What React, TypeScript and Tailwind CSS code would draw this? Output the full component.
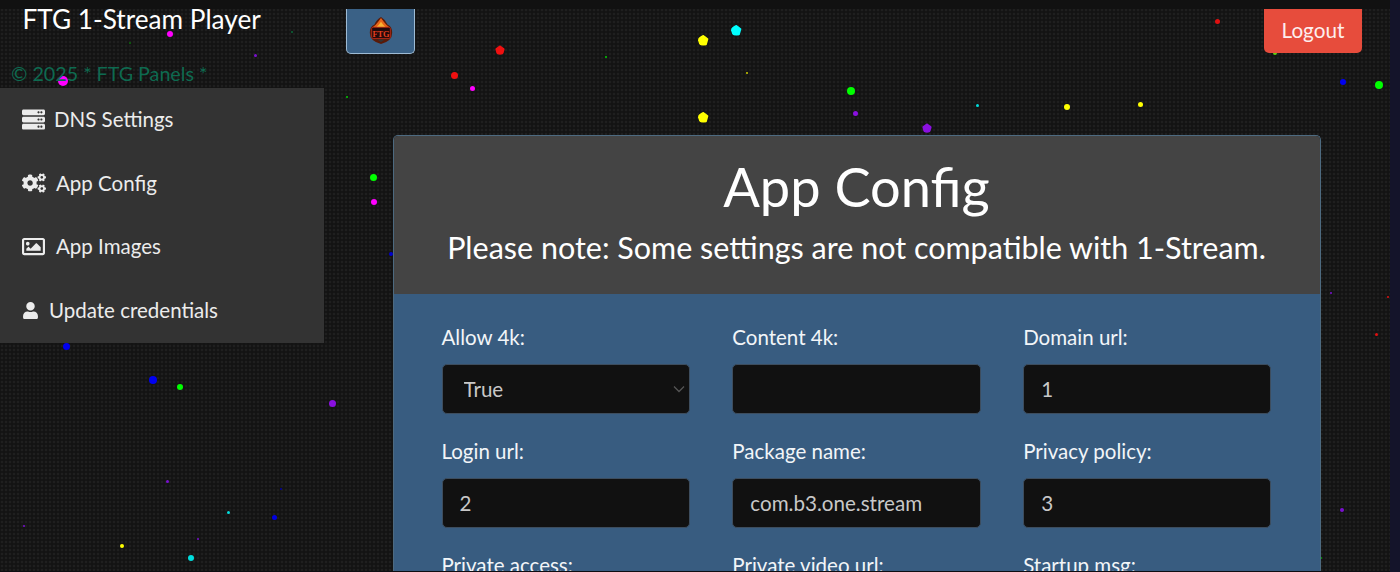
import React from "react";
import { FaServer, FaCogs, FaRegImage, FaUser } from "react-icons/fa";

type Dot = [number, number, number, string];
const dots: Dot[] = [
  [170, 34, 3, "#f0f"], [255, 55, 1.5, "#7a10d0"], [130, 43, 1, "#0a6a0a"], [292, 32, 0.7, "#0a6a3a"],
  [63, 81, 5, "#f0f"], [347, 97, 1, "#0c0"], [500, 50, 4.8, "#f01010"], [454, 75, 3.5, "#f01010"],
  [472, 88, 2.5, "#f0f"], [606, 57, 1, "#0c0"], [703, 40, 5.5, "#ff0"], [736, 30, 5.5, "#0ff"],
  [747, 73, 1, "#cc0"], [851, 91, 4, "#0f0"], [855, 113, 2.5, "#8a10e0"], [703, 117, 5.5, "#ff0"],
  [927, 128, 4.8, "#8a10e0"], [977, 105, 1.5, "#0dd"], [1067, 107, 3, "#ff0"], [1140, 104, 2.5, "#ff0"],
  [1217, 21, 2.5, "#e01010"], [1275, 53, 2, "#60d010"], [1343, 82, 3, "#0000f0"], [1379, 85, 4, "#0f0"],
  [373, 177, 3.5, "#0f0"], [374, 202, 3, "#f0f"], [391, 254, 2, "#0000d0"], [66, 346, 3.5, "#0000f0"],
  [153, 380, 4, "#0000f0"], [180, 387, 3, "#0f0"], [332, 403, 3.5, "#8a10e0"], [167, 481, 1.5, "#7a10d0"],
  [281, 489, 1, "#0000a0"], [228, 512, 1.5, "#0dd"], [274, 517, 2.5, "#0000e0"], [122, 546, 2, "#ff0"],
  [191, 558, 3, "#0dd"], [198, 539, 0.7, "#7a10d0"], [24, 526, 1, "#7a10d0"], [1342, 510, 2, "#7a10d0"],
  [1376, 334, 1.5, "#e01010"], [1388, 297, 1, "#e01010"], [1331, 293, 0.7, "#7a10d0"], [1321, 558, 1, "#0a0"],
];

const pentagon = "polygon(50% 0%, 100% 38%, 82% 100%, 18% 100%, 0% 38%)";

const nav = [
  { label: "DNS Settings", icon: <FaServer className="text-[23px]" />, gap: "gap-[9px]" },
  { label: "App Config", icon: <FaCogs className="text-[24px]" />, gap: "gap-[10px]" },
  { label: "App Images", icon: <FaRegImage className="text-[23px]" />, gap: "gap-[11px]" },
  { label: "Update credentials", icon: <FaUser className="text-[17px]" />, gap: "gap-[10px]" },
];

const Field = ({ label, children }: { label: string; children?: React.ReactNode }) => (
  <div className="flex flex-col">
    <label className="mb-[13px] h-[27px] text-[20.5px] leading-[27px] text-[#f2f5f8]">{label}</label>
    {children}
  </div>
);

const Input = ({ value = "" }: { value?: string }) => (
  <input
    readOnly
    value={value}
    className="mb-[24px] h-[50px] w-full rounded-[5px] border border-[#3d4d5e] bg-[#111111] pl-[17px] text-[20.6px] text-[#c8c8c8] outline-none"
  />
);

export default function App() {
  return (
    <div className="relative h-[572px] w-[1400px] overflow-hidden bg-[#131313] bg-[radial-gradient(circle,#1f1f1f_1px,#131313_1.7px)] bg-size-[4px_4px] font-['Lato','Noto_Sans',sans-serif] text-white">
      {dots.map(([x, y, r, c], i) => (
        <span
          key={i}
          className="absolute rounded-full"
          style={{ left: x - r, top: y - r, width: r * 2, height: r * 2, background: c, clipPath: r >= 4.8 && c !== "#f0f" ? pentagon : undefined }}
        />
      ))}

      <div className="relative flex h-full flex-col border-b border-[#0d0d12]">
        <div className="h-[9px] shrink-0 bg-[#111111]" />
        <div className="flex min-h-0 flex-1 pr-[10px]">
          {/* left column */}
          <aside className="flex w-[324px] shrink-0 flex-col">
            <h1 className="ml-[22.5px] h-[24px] text-[26.2px] leading-[21px] font-normal text-white">FTG 1-Stream Player</h1>
            <p className="ml-[11px] mt-[29px] h-[26px] text-[19.7px] leading-[24px] text-[#0e6a50]">© 2025 * FTG Panels *</p>
            <nav className="flex h-[255px] flex-col bg-[#333333] pb-[1px]">
              {nav.map((n) => (
                <a key={n.label} className={`flex flex-1 items-center pl-[22px] text-[20.5px] text-[#ececec] ${n.gap}`}>
                  {n.icon}
                  <span>{n.label}</span>
                </a>
              ))}
            </nav>
          </aside>

          {/* centre column */}
          <main className="flex min-w-0 flex-1 flex-col">
            <div className="flex h-[126px] shrink-0 items-start justify-between pl-[22px] pr-[28px]">
              <button className="flex h-[45px] w-[69px] items-center justify-center rounded-b-[5px] border border-t-0 border-[#9dbbd4] bg-[#3a6186]">
                <svg width="28" height="28" viewBox="0 0 30 30">
                  <path d="M3 17 Q3 10 8 8 Q10 3 15 0 Q20 3 22 8 Q27 10 27 17 Q27 26 15 29 Q3 26 3 17 Z" fill="#5a1a08" />
                  <path d="M6 11 Q10 8 12 5 L15 1 L18 5 Q20 8 24 11 Z" fill="#e8641a" />
                  <path d="M10 11 Q13 8 15 5 Q17 8 20 11 Z" fill="#f9b233" />
                  <rect x="5" y="11" width="20" height="12" rx="1.5" fill="#22090a" stroke="#b02a18" strokeWidth="1" />
                  <text x="15" y="21" textAnchor="middle" fontSize="9" fontWeight="700" fontFamily="Liberation Serif, serif" fill="#e8401f">FTG</text>
                  <path d="M11 24 H19 L15 27 Z" fill="#333" />
                </svg>
              </button>
              <button className="h-[44px] w-[98px] rounded-b-[5px] bg-[#e74c3c] text-[20.7px] text-[#fdeeee]">Logout</button>
            </div>

            <section className="ml-[68.5px] w-[928px] flex-1 overflow-hidden rounded-t-[5px] border border-b-0 border-[#4d6a80]">
              <header className="flex h-[158px] flex-col items-center bg-[#444444]">
                <h2 className="mt-[15px] text-[54.2px] leading-[72px] font-normal text-white">App Config</h2>
                <p className="mt-[4px] text-[30.5px] leading-[40px] text-white">Please note: Some settings are not compatible with 1-Stream.</p>
              </header>
              <div className="grid h-full grid-cols-3 content-start gap-x-[42.5px] bg-[#385c80] pl-[48px] pr-[48px] pt-[30px]">
                <Field label="Allow 4k:">
                  <div className="relative mb-[24px]">
                    <select className="h-[50px] w-full appearance-none rounded-[5px] border border-[#3d4d5e] bg-[#111111] pl-[21px] text-[20.6px] text-[#c8c8c8] outline-none">
                      <option>True</option>
                    </select>
                    <svg className="absolute right-[5px] top-[21px]" width="12" height="9" viewBox="0 0 12 9" fill="none" stroke="#555" strokeWidth="1.3">
                      <path d="M1 1.5 L6 6.5 L11 1.5" />
                    </svg>
                  </div>
                </Field>
                <Field label="Content 4k:"><Input /></Field>
                <Field label="Domain url:"><Input value="1" /></Field>
                <Field label="Login url:"><Input value="2" /></Field>
                <Field label="Package name:"><Input value="com.b3.one.stream" /></Field>
                <Field label="Privacy policy:"><Input value="3" /></Field>
                <Field label="Private access:" />
                <Field label="Private video url:" />
                <Field label="Startup msg:" />
              </div>
            </section>
          </main>
        </div>
      </div>
      <div className="absolute bottom-0 right-0 top-0 w-[10px] bg-[#14142a]" />
    </div>
  );
}
